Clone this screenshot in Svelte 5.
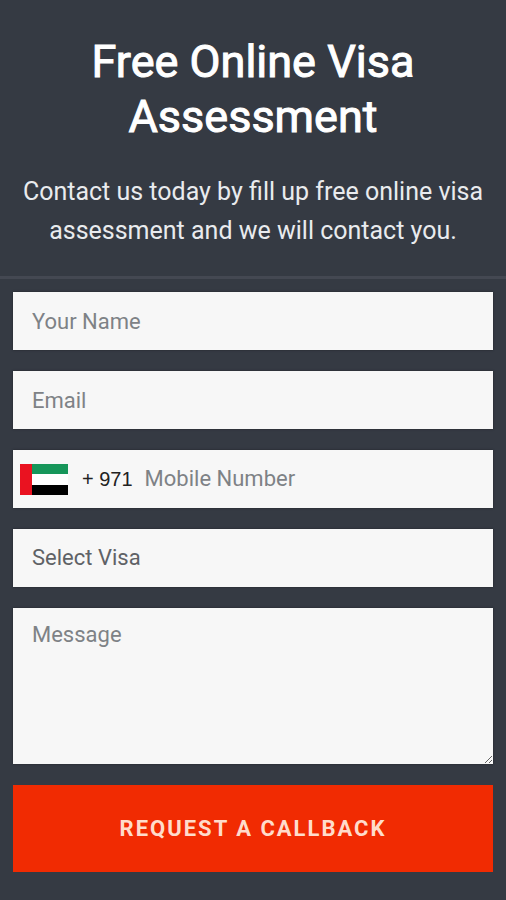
<script>
  let name = "";
  let email = "";
  let mobile = "";
  let visa = "";
  let message = "";
</script>

<style>
  :global(body) {
    background: #353a43;
  }

  .assessment {
    font-family: Roboto, "Liberation Sans", sans-serif;
    padding-bottom: 28px;
  }

  header {
    padding: 34px 16px 26px;
    border-bottom: 3px solid #444852;
    text-align: center;
    color: #fff;
  }

  h1 {
    margin: 0 0 28px;
    font-size: 45px;
    font-weight: 400;
    line-height: 55px;
    -webkit-text-stroke: 1px #fff;
  }

  p {
    margin: 0;
    color: #e9ebee;
    font-size: 25px;
    line-height: 39px;
  }

  form {
    display: flex;
    flex-direction: column;
    gap: 21px;
    padding: 13px 13px 0;
  }

  .field {
    display: block;
    box-sizing: border-box;
    width: 100%;
    height: 58px;
    margin: 0;
    padding: 0 19px;
    border: none;
    border-radius: 0;
    background: #f7f7f7;
    box-shadow: 0 0 2px #1f242a;
    color: #5f6266;
    font: inherit;
    font-size: 22px;
    line-height: 28px;
  }

  select.field {
    appearance: none;
  }

  textarea.field {
    height: 156px;
    padding-top: 13px;
    resize: vertical;
  }

  ::placeholder {
    color: #7e8286;
    opacity: 1;
  }

  .phone {
    display: flex;
    align-items: center;
    padding: 0 19px 0 7px;
  }

  .phone svg {
    flex: none;
    width: 48px;
    height: 31px;
  }

  .code {
    margin: 0 12px 0 14px;
    color: #222;
    font-family: "Liberation Sans", Arial, sans-serif;
    font-size: 20px;
    white-space: nowrap;
  }

  .phone input {
    flex: 1;
    min-width: 0;
    padding: 0;
    border: none;
    background: none;
    color: inherit;
    font: inherit;
  }

  button {
    height: 87px;
    border: none;
    background: #f12b02;
    color: #ffdccb;
    font: inherit;
    font-size: 22px;
    font-weight: 700;
    letter-spacing: 2px;
    text-transform: uppercase;
    cursor: pointer;
  }
</style>

<section class="assessment">
  <header>
    <h1>Free Online Visa Assessment</h1>
    <p>Contact us today by fill up free online visa assessment and we will contact you.</p>
  </header>

  <form on:submit|preventDefault>
    <input class="field" type="text" aria-label="Your Name" placeholder="Your Name" bind:value={name} />
    <input class="field" type="email" aria-label="Email" placeholder="Email" bind:value={email} />

    <div class="field phone">
      <svg viewBox="0 0 48 31" aria-hidden="true">
        <rect width="48" height="31" fill="#fff" />
        <rect x="12" width="36" height="10" fill="#16965a" />
        <rect x="12" y="21" width="36" height="10" fill="#000" />
        <rect width="12" height="31" fill="#ea1220" />
      </svg>
      <span class="code">+ 971</span>
      <input type="tel" aria-label="Mobile Number" placeholder="Mobile Number" bind:value={mobile} />
    </div>

    <select class="field" aria-label="Select Visa" bind:value={visa}>
      <option value="">Select Visa</option>
    </select>

    <textarea class="field" aria-label="Message" placeholder="Message" bind:value={message}></textarea>

    <button type="submit">Request a callback</button>
  </form>
</section>
